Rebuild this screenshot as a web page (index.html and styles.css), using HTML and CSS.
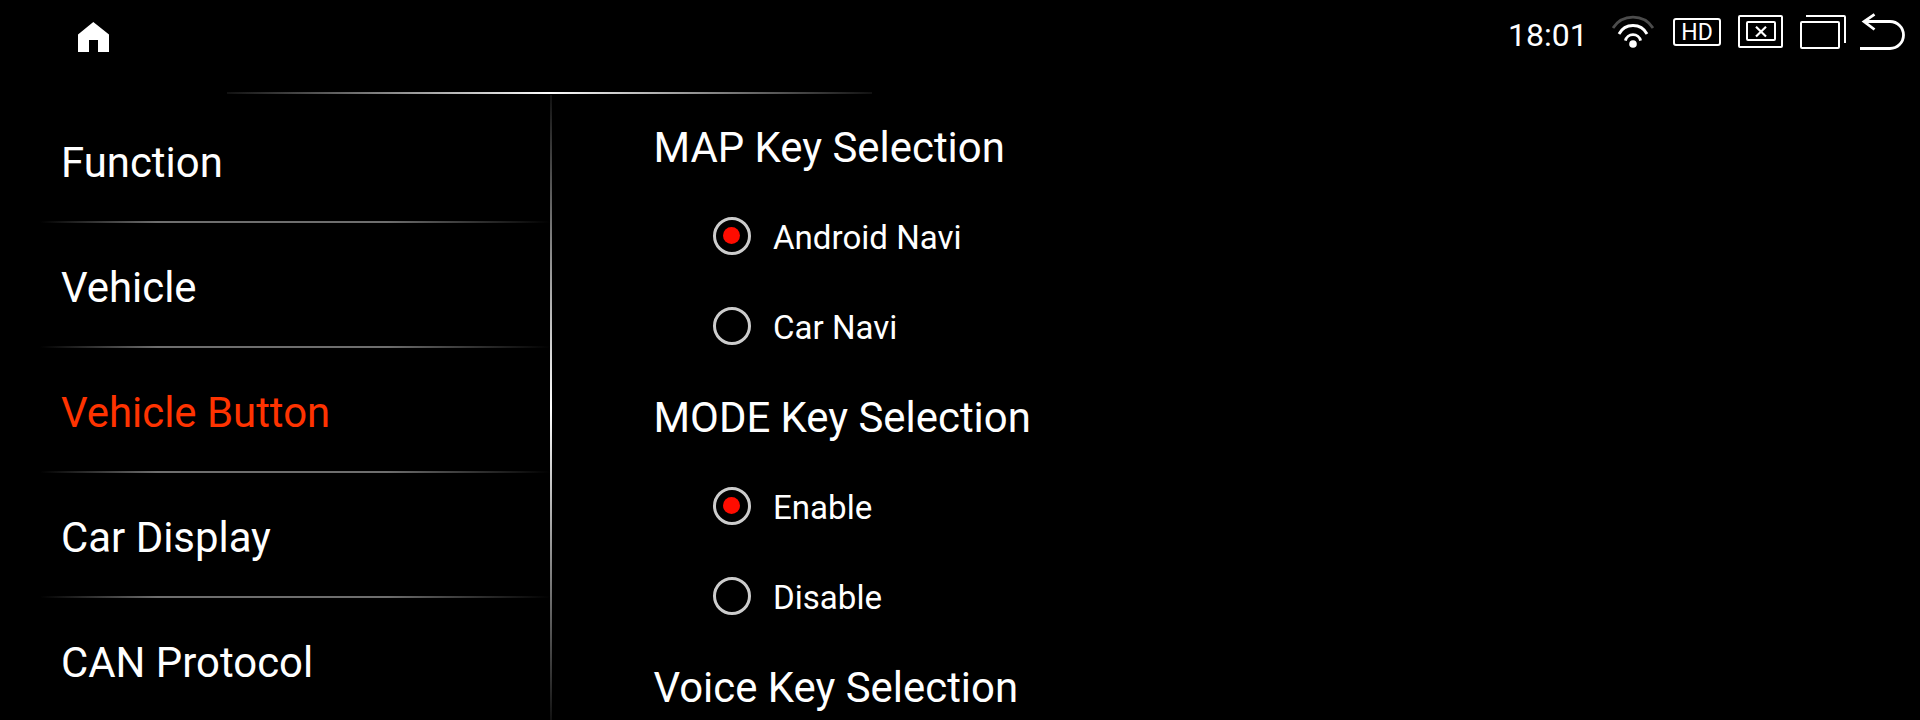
FILE: index.html
```html
<!DOCTYPE html>
<html lang="en">
<head>
<meta charset="utf-8">
<title>Vehicle Button</title>
<link rel="stylesheet" href="styles.css">
</head>
<body>
<header class="bar">
  <svg class="home" viewBox="78 0 31 64" width="31" height="64"><path d="M93.3 22 109 34.6V52H98V40H89V52H78V34.6Z" fill="#fff"/></svg>
  <div class="status">
    <time class="clock">18:01</time>
    <svg viewBox="1610 0 46 64" width="46" height="64" fill="none" stroke="#fff" stroke-width="2.8">
      <path d="M1613 28A23.9 23.9 0 0 1 1653 28" stroke="#4c4c4c"/>
      <path d="M1619 34A15.8 15.8 0 0 1 1647 34"/>
      <path d="M1625.4 40.6A7.8 7.8 0 0 1 1640.6 40.6"/>
      <circle cx="1633" cy="44" r="3.8" fill="#fff" stroke="none"/>
    </svg>
    <div class="hd">HD</div>
    <svg viewBox="1738 0 45 64" width="45" height="64" fill="none" stroke="#fff" stroke-width="2">
      <rect x="1739" y="16" width="43" height="31" rx="1"/>
      <rect x="1747" y="22" width="28" height="18" rx="1"/>
      <path d="M1756 26.8 1766 36.5M1766 26.8 1756 36.5" stroke-width="2.2"/>
    </svg>
    <svg viewBox="1800 0 46 64" width="46" height="64" fill="none" stroke="#fff" stroke-width="2">
      <rect x="1801" y="22" width="38" height="26" rx="1"/>
      <path d="M1806 16H1844Q1845 16 1845 17V43"/>
    </svg>
    <svg viewBox="1860 0 45 64" width="45" height="64" fill="none" stroke="#fff" stroke-width="2.8">
      <path d="M1860 48.5H1890A13.5 13.5 0 0 0 1890 21.5H1864M1874.5 14.3 1864 21.5 1874.5 29.5"/>
    </svg>
  </div>
</header>
<div class="glow"></div>
<div class="main">
  <nav class="side">
    <div class="item">Function</div>
    <div class="item">Vehicle</div>
    <div class="item active">Vehicle Button</div>
    <div class="item">Car Display</div>
    <div class="item">CAN Protocol</div>
  </nav>
  <div class="split"></div>
  <section class="content">
    <h2 class="title">MAP Key Selection</h2>
    <div class="option"><span class="radio on"></span><span class="label">Android Navi</span></div>
    <div class="option"><span class="radio"></span><span class="label">Car Navi</span></div>
    <h2 class="title">MODE Key Selection</h2>
    <div class="option"><span class="radio on"></span><span class="label">Enable</span></div>
    <div class="option"><span class="radio"></span><span class="label">Disable</span></div>
    <h2 class="title">Voice Key Selection</h2>
  </section>
</div>
</body>
</html>
```
FILE: styles.css
```css
* { box-sizing: border-box; }
body {
  margin: 0;
  width: 1920px;
  height: 720px;
  overflow: hidden;
  background: #000;
  color: #fff;
  font-family: Roboto, sans-serif;
}
svg { display: block; flex: none; }
.bar {
  height: 92px;
  padding: 0 15px 0 78px;
  display: flex;
  justify-content: space-between;
  align-items: flex-start;
}
.status { display: flex; align-items: flex-start; }
.clock {
  width: 102px;
  padding-top: 16px;
  font-size: 32px;
  line-height: 38px;
}
.hd {
  width: 48px;
  height: 28px;
  margin: 18px 17px 0 17px;
  border: 2px solid #fff;
  border-radius: 3px;
  font-size: 23px;
  line-height: 26px;
  text-align: center;
}
.status svg + svg { margin-left: 17px; }
.status svg:last-child { margin-left: 14px; }
.glow {
  width: 645px;
  height: 2px;
  margin-left: 227px;
  background: linear-gradient(90deg, #111, #fff 50%, #111);
}
.main { display: flex; height: 625px; margin-top: 1px; }
.side { width: 550px; padding: 3px 0 0 40px; overflow: hidden; }
.item {
  height: 125px;
  padding: 6px 0 0 21px;
  font-size: 41.9px;
  line-height: 117px;
  background: linear-gradient(90deg, transparent, #6e6e6e 23%, #6e6e6e 68%, transparent) bottom / 100% 2px no-repeat;
}
.active { color: #ff3300; }
.split { width: 2px; background: linear-gradient(#111, #fff 50%, #111); }
.content { flex: 1; padding: 8px 0 0 101.5px; overflow: hidden; }
.title { height: 90px; margin: 0; font-size: 41.9px; font-weight: 400; line-height: 90px; }
.option { height: 90px; display: flex; align-items: center; padding-left: 59px; }
.radio {
  width: 38px;
  height: 38px;
  margin: 0 22.5px 5px 0;
  border: 3px solid #ccc;
  border-radius: 50%;
  display: flex;
  align-items: center;
  justify-content: center;
}
.on::before { content: ""; width: 17px; height: 17px; border-radius: 50%; background: #ff0c00; }
.label { font-size: 33.1px; line-height: 40px; }
```
